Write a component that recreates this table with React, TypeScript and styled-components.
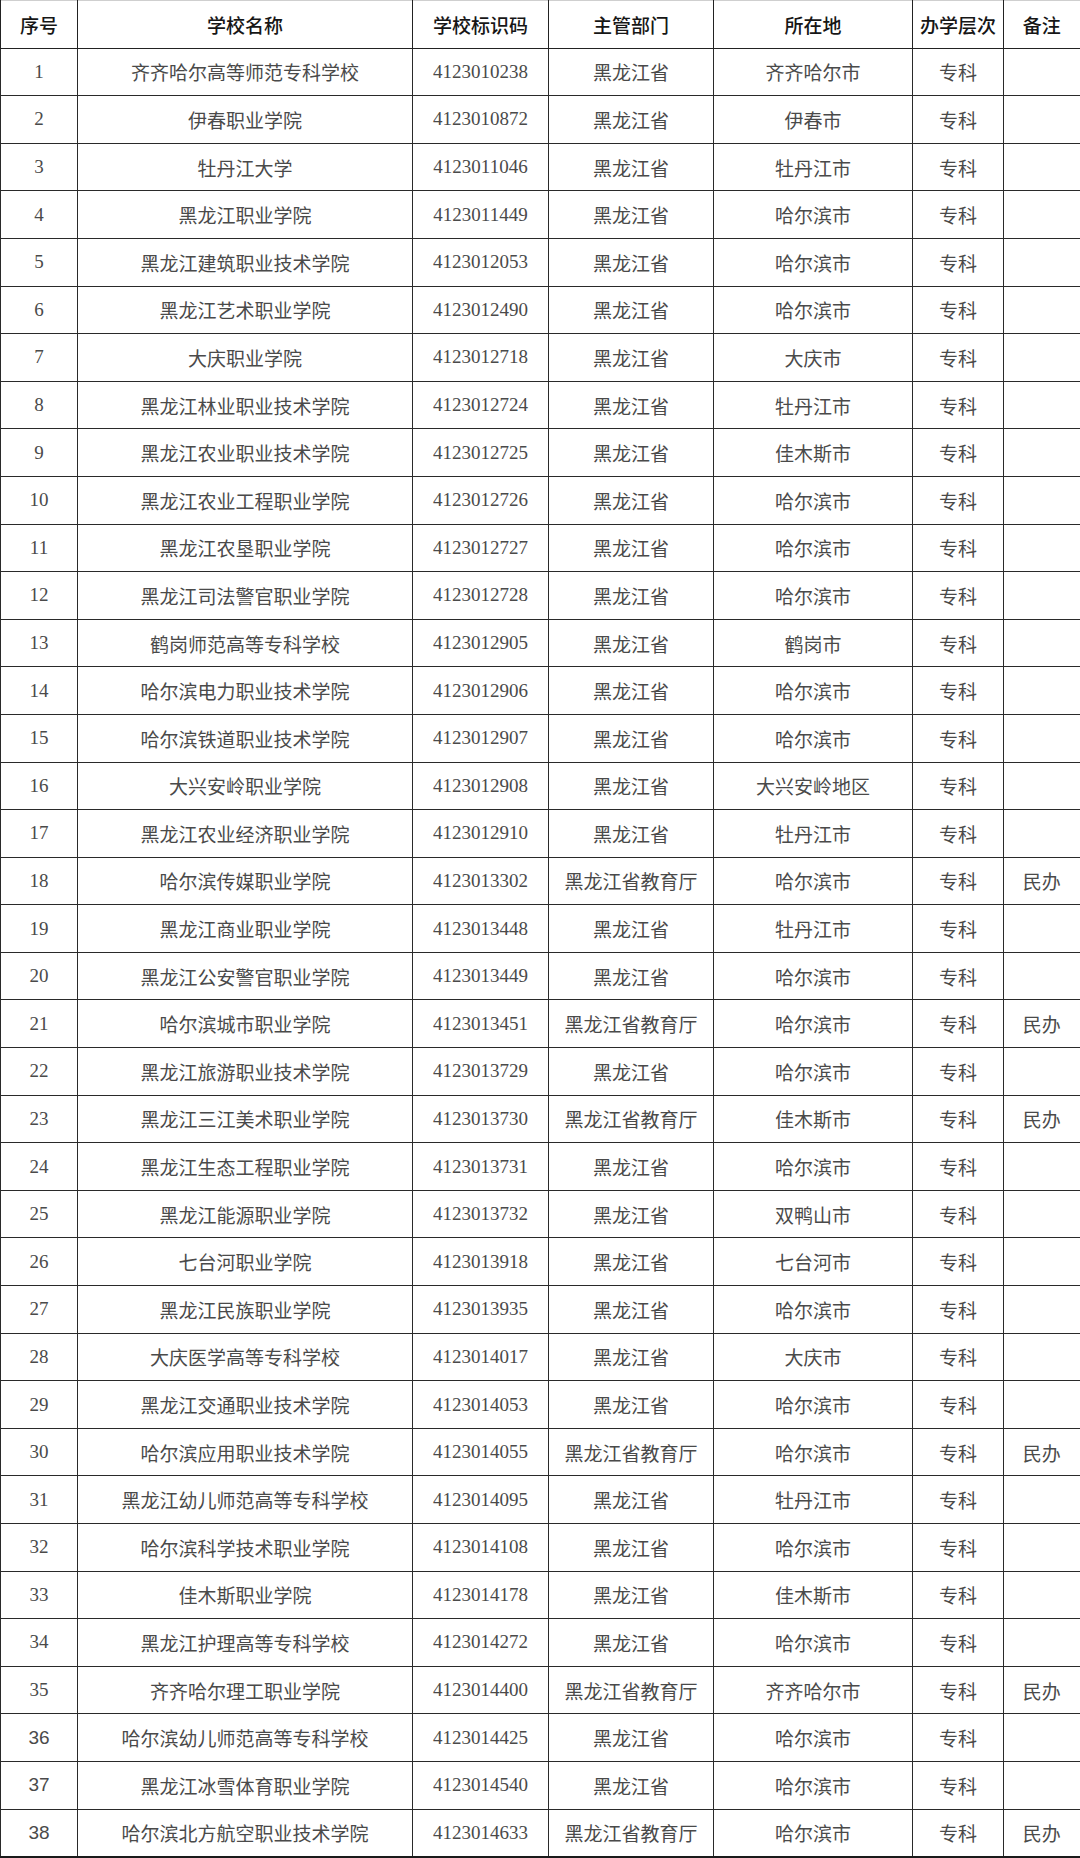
import React from 'react';
import styled, { createGlobalStyle } from 'styled-components';

type School = [string, string, string, string, string?];

// 序号, 学校名称, 学校标识码, 主管部门, 所在地, 备注
const schools: School[] = [
  ['齐齐哈尔高等师范专科学校', '4123010238', '黑龙江省', '齐齐哈尔市'],
  ['伊春职业学院', '4123010872', '黑龙江省', '伊春市'],
  ['牡丹江大学', '4123011046', '黑龙江省', '牡丹江市'],
  ['黑龙江职业学院', '4123011449', '黑龙江省', '哈尔滨市'],
  ['黑龙江建筑职业技术学院', '4123012053', '黑龙江省', '哈尔滨市'],
  ['黑龙江艺术职业学院', '4123012490', '黑龙江省', '哈尔滨市'],
  ['大庆职业学院', '4123012718', '黑龙江省', '大庆市'],
  ['黑龙江林业职业技术学院', '4123012724', '黑龙江省', '牡丹江市'],
  ['黑龙江农业职业技术学院', '4123012725', '黑龙江省', '佳木斯市'],
  ['黑龙江农业工程职业学院', '4123012726', '黑龙江省', '哈尔滨市'],
  ['黑龙江农垦职业学院', '4123012727', '黑龙江省', '哈尔滨市'],
  ['黑龙江司法警官职业学院', '4123012728', '黑龙江省', '哈尔滨市'],
  ['鹤岗师范高等专科学校', '4123012905', '黑龙江省', '鹤岗市'],
  ['哈尔滨电力职业技术学院', '4123012906', '黑龙江省', '哈尔滨市'],
  ['哈尔滨铁道职业技术学院', '4123012907', '黑龙江省', '哈尔滨市'],
  ['大兴安岭职业学院', '4123012908', '黑龙江省', '大兴安岭地区'],
  ['黑龙江农业经济职业学院', '4123012910', '黑龙江省', '牡丹江市'],
  ['哈尔滨传媒职业学院', '4123013302', '黑龙江省教育厅', '哈尔滨市', '民办'],
  ['黑龙江商业职业学院', '4123013448', '黑龙江省', '牡丹江市'],
  ['黑龙江公安警官职业学院', '4123013449', '黑龙江省', '哈尔滨市'],
  ['哈尔滨城市职业学院', '4123013451', '黑龙江省教育厅', '哈尔滨市', '民办'],
  ['黑龙江旅游职业技术学院', '4123013729', '黑龙江省', '哈尔滨市'],
  ['黑龙江三江美术职业学院', '4123013730', '黑龙江省教育厅', '佳木斯市', '民办'],
  ['黑龙江生态工程职业学院', '4123013731', '黑龙江省', '哈尔滨市'],
  ['黑龙江能源职业学院', '4123013732', '黑龙江省', '双鸭山市'],
  ['七台河职业学院', '4123013918', '黑龙江省', '七台河市'],
  ['黑龙江民族职业学院', '4123013935', '黑龙江省', '哈尔滨市'],
  ['大庆医学高等专科学校', '4123014017', '黑龙江省', '大庆市'],
  ['黑龙江交通职业技术学院', '4123014053', '黑龙江省', '哈尔滨市'],
  ['哈尔滨应用职业技术学院', '4123014055', '黑龙江省教育厅', '哈尔滨市', '民办'],
  ['黑龙江幼儿师范高等专科学校', '4123014095', '黑龙江省', '牡丹江市'],
  ['哈尔滨科学技术职业学院', '4123014108', '黑龙江省', '哈尔滨市'],
  ['佳木斯职业学院', '4123014178', '黑龙江省', '佳木斯市'],
  ['黑龙江护理高等专科学校', '4123014272', '黑龙江省', '哈尔滨市'],
  ['齐齐哈尔理工职业学院', '4123014400', '黑龙江省教育厅', '齐齐哈尔市', '民办'],
  ['哈尔滨幼儿师范高等专科学校', '4123014425', '黑龙江省', '哈尔滨市'],
  ['黑龙江冰雪体育职业学院', '4123014540', '黑龙江省', '哈尔滨市'],
  ['哈尔滨北方航空职业技术学院', '4123014633', '黑龙江省教育厅', '哈尔滨市', '民办'],
];

const titles = ['序号', '学校名称', '学校标识码', '主管部门', '所在地', '办学层次', '备注'];
const widths = [77, 335, 136, 165, 199, 91, 77];

const GlobalStyle = createGlobalStyle`
  html, body {
    margin: 0;
    padding: 0;
    background: #ffffff;
  }
`;

const Sheet = styled.table`
  width: 1080px;
  table-layout: fixed;
  border-collapse: collapse;
  border-top: 1px solid #cfcfcf;
  border-left: 1px solid #cfcfcf;
  border-right: 2px solid #1a1a1a;
  border-bottom: 2px solid #1a1a1a;
`;

const Row = styled.tr`
  height: 47.6px;
`;

const HeadCell = styled.th`
  padding: 0;
  border: 1px solid #222;
  border-top: none;
  font-family: 'Noto Sans CJK SC', sans-serif;
  font-size: 19px;
  font-weight: 500;
  color: #161616;
  text-align: center;
  vertical-align: middle;
  white-space: nowrap;
`;

const Cell = styled.td<{ $sans?: boolean }>`
  padding: 0;
  border: 1px solid #2a2a2a;
  font-family: ${(p) =>
    p.$sans
      ? "'Liberation Sans', 'Noto Sans CJK SC', sans-serif"
      : "'Liberation Serif', 'Noto Sans CJK SC', serif"};
  font-size: 19px;
  font-weight: 400;
  color: #4a4a4a;
  text-align: center;
  vertical-align: middle;
  white-space: nowrap;
  overflow: hidden;
`;

const App: React.FC = () => {
  return (
    <>
      <GlobalStyle />
      <Sheet>
        <colgroup>
          {widths.map((w, i) => (
            <col key={i} style={{ width: w }} />
          ))}
        </colgroup>
        <thead>
          <Row>
            {titles.map((t) => (
              <HeadCell key={t}>{t}</HeadCell>
            ))}
          </Row>
        </thead>
        <tbody>
          {schools.map(([name, code, dept, place, note], i) => (
            <Row key={code}>
              <Cell $sans={i >= 35}>{i + 1}</Cell>
              <Cell>{name}</Cell>
              <Cell>{code}</Cell>
              <Cell>{dept}</Cell>
              <Cell>{place}</Cell>
              <Cell>专科</Cell>
              <Cell>{note ?? ''}</Cell>
            </Row>
          ))}
        </tbody>
      </Sheet>
    </>
  );
};

export default App;
